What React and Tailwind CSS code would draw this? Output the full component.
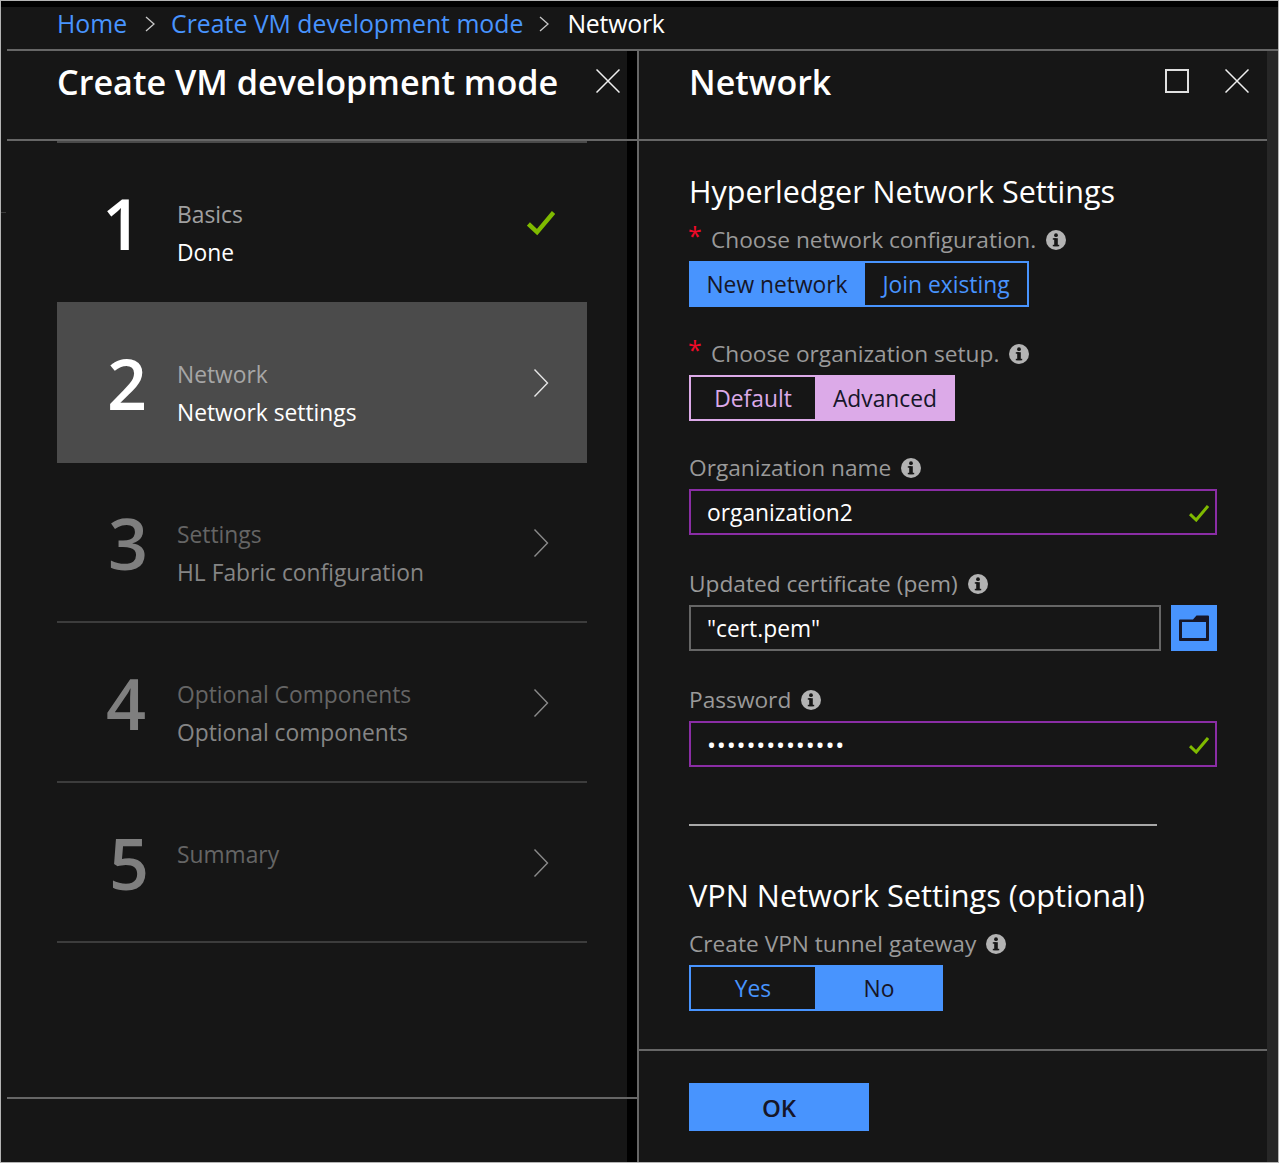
const F = '"Open Sans","Noto Sans",sans-serif';

function Info() {
  return (
    <svg width="20" height="20" viewBox="0 0 20 20" className="shrink-0">
      <circle cx="10" cy="10" r="10" fill="#b3b3b3" />
      <rect x="8.2" y="8.2" width="3.6" height="8" fill="#161616" />
      <rect x="6.8" y="8.2" width="3" height="1.5" fill="#161616" />
      <rect x="6.8" y="14.8" width="6.4" height="1.5" fill="#161616" />
      <circle cx="10" cy="5.2" r="1.9" fill="#161616" />
    </svg>
  );
}

function Check({ w = 20, h = 17, sw = 3 }) {
  return (
    <svg width={w} height={h} viewBox="0 0 20 17" className="shrink-0">
      <path d="M1 9.2 L7.2 15 L19 1" fill="none" stroke="#7fba00" strokeWidth={sw} />
    </svg>
  );
}

function Chevron({ color = '#c8c8c8' }) {
  return (
    <svg width="16" height="30" viewBox="0 0 16 30" className="shrink-0">
      <path d="M1.5 1.5 L14.5 15 L1.5 28.5" fill="none" stroke={color} strokeWidth="1.4" />
    </svg>
  );
}

function Crumb() {
  return (
    <svg width="10" height="16" viewBox="0 0 10 16" className="shrink-0">
      <path d="M1 1 L9 8 L1 15" fill="none" stroke="#c8c8c8" strokeWidth="1.3" />
    </svg>
  );
}

function Close() {
  return (
    <svg width="24" height="24" viewBox="0 0 24 24" className="shrink-0">
      <path d="M0.5 0.5 L23.5 23.5 M23.5 0.5 L0.5 23.5" stroke="#efefef" strokeWidth="1.5" />
    </svg>
  );
}

const digitPad = { 1: 'pl-[45px]', 2: 'pl-[50px]', 3: 'pl-[51px]', 4: 'pl-[49px]', 5: 'pl-[52px]' };

function Step({ n, title, sub, state }) {
  const active = state === 'active';
  const done = state === 'done';
  const dim = !active && !done;
  return (
    <div className={`flex items-start relative ${done ? 'h-[159px]' : ''} ${active ? 'h-[161px] pt-px bg-[#4b4b4b]' : ''} ${dim ? 'h-[160px] border-b-2 border-[#3c3c3c]' : ''}`}>
      <div className={`w-[120px] shrink-0 pt-[34px] ${digitPad[n]} text-[70px] leading-[92px] font-semibold ${dim ? 'text-[#7f7f7f]' : 'text-white'}`}>
        {n}
      </div>
      <div className="pt-[53px]">
        <div className={`text-[22.8px] leading-[38px] ${active ? 'text-[#a6a6a6]' : done ? 'text-[#a0a0a0]' : 'text-[#656565]'}`}>{title}</div>
        {sub && <div className={`text-[22.8px] leading-[38px] whitespace-nowrap ${dim ? 'text-[#858585]' : 'text-white'}`}>{sub}</div>}
      </div>
      <div className={`ml-auto pr-[38px] ${done ? 'pt-[67px]' : 'pt-[65px]'}`}>
        {done ? <div className="-mr-[6px]"><Check w={28} h={26} sw={3.2} /></div> : <Chevron color={dim ? '#8a8a8a' : '#e6e6e6'} />}
      </div>
    </div>
  );
}

function Label({ children, req, mt }) {
  return (
    <div style={{ marginTop: mt }} className="h-[28px] pt-[2px] flex items-center text-[22.7px] text-[#9a9a9a] whitespace-nowrap">
      {req && <span className="w-[22px] -ml-px mr-px text-[#f00a28] text-[25px] leading-none -mt-[9px]">*</span>}
      <span className="mr-[10px]">{children}</span>
      <Info />
    </div>
  );
}

function Seg({ a, b, aw, bw, on, color }) {
  const isBlue = color === 'blue';
  const c = isBlue ? 'border-[#4894fe]' : 'border-[#dcaae8]';
  const fill = isBlue ? 'bg-[#4894fe]' : 'bg-[#dcaae8]';
  const txt = isBlue ? 'text-[#4894fe]' : 'text-[#dcaae8]';
  const opt = (label, w, active, side) => (
    <div style={{ width: w }} className={`h-[46px] pt-[2px] flex items-center justify-center text-[22.8px] border-2 ${c} ${side} ${active ? `${fill} text-[#161628]` : txt}`}>{label}</div>
  );
  return (
    <div className="flex mt-[8px]">
      {opt(a, aw, on === 0, on === 0 ? '' : 'border-r-0')}
      {opt(b, bw, on === 1, on === 1 ? '' : 'border-l-0')}
    </div>
  );
}

export default function App() {
  return (
    <div style={{ fontFamily: F }} className="w-[1279px] h-[1163px] bg-[#161616] border border-[#b4b4b4] flex flex-col overflow-hidden relative">
      <div className="absolute left-0 top-[211px] w-[5px] h-px bg-[#3a3a3a]" />
      <div className="h-[6px] bg-black shrink-0" />
      <div className="h-[42px] shrink-0 flex items-center pl-[56px] pb-[8px] text-[24.8px] whitespace-nowrap">
        <span className="text-[#4894fe]">Home</span>
        <span className="ml-[18px] mr-[16px]"><Crumb /></span>
        <span className="text-[#4894fe]">Create VM development mode</span>
        <span className="ml-[16px] mr-[18px]"><Crumb /></span>
        <span className="text-white tracking-[-0.2px]">Network</span>
      </div>
      <div className="h-[2px] ml-[6px] -mr-[1px] bg-[#666666] shrink-0" />
      <div className="flex-1 flex min-h-0">
        <div className="w-[636px] shrink-0 flex relative">
          <div className="w-[626px] shrink-0 flex flex-col">
            <div className="h-[88px] shrink-0 flex items-start pl-[56px]">
              <div className="text-[34.2px] leading-[62px] font-semibold text-white whitespace-nowrap">Create VM development mode</div>
              <div className="ml-auto mt-[18px] mr-[7px]"><Close /></div>
            </div>
            <div className="h-[2px] ml-[6px] -mr-[10px] relative z-10 bg-[#666666] shrink-0" />
            <div className="ml-[56px] w-[530px]">
              <div className="h-[2px] bg-[#4a4a4a]" />
              <Step n="1" title="Basics" sub="Done" state="done" />
              <Step n="2" title="Network" sub="Network settings" state="active" />
              <Step n="3" title="Settings" sub="HL Fabric configuration" />
              <Step n="4" title="Optional Components" sub="Optional components" />
              <Step n="5" title="Summary" />
            </div>
            <div className="h-[2px] ml-[6px] -mr-[10px] mt-[154px] relative z-10 bg-[#666666] shrink-0" />
          </div>
          <div className="w-[10px] bg-black shrink-0" />
        </div>
        <div className="w-[2px] bg-[#666666] shrink-0" />
        <div className="w-[628px] shrink-0 flex flex-col">
          <div className="h-[88px] shrink-0 flex items-start pl-[50px]">
            <div className="text-[34px] leading-[62px] font-semibold text-white">Network</div>
            <div className="ml-auto mt-[18px] mr-[18px] flex items-center gap-[36px]">
              <div className="w-[24px] h-[24px] border-2 border-[#e0e0e0]" />
              <Close />
            </div>
          </div>
          <div className="h-[2px] bg-[#666666] shrink-0" />
          <div className="pl-[50px] w-[578px] pt-[31px]">
            <div className="h-[40px] leading-[38px] text-[30.5px] text-white whitespace-nowrap">Hyperledger Network Settings</div>
            <Label req mt={13}>Choose network configuration.</Label>
            <Seg a="New network" b="Join existing" aw={176} bw={164} on={0} color="blue" />
            <Label req mt={32}>Choose organization setup.</Label>
            <Seg a="Default" b="Advanced" aw={126} bw={140} on={1} color="purple" />
            <Label mt={32}>Organization name</Label>
            <div className="mt-[8px] h-[46px] pt-[2px] border-2 border-[#8a2da5] flex items-center justify-between pl-[16px] pr-[6px] text-[22.8px] text-white">
              organization2<Check />
            </div>
            <Label mt={34}>Updated certificate (pem)</Label>
            <div className="mt-[8px] flex gap-[10px]">
              <div className="flex-1 h-[46px] pt-[2px] border-2 border-[#666666] flex items-center pl-[16px] text-[22.8px] text-white">"cert.pem"</div>
              <div className="w-[46px] h-[46px] bg-[#4894fe] flex items-center justify-center">
                <svg width="30" height="26" viewBox="0 0 30 26">
                  <path d="M1 4.5 H14 L17.5 0.5 H29 Q30 0.5 30 1.5 V25 Q30 26 29 26 H1 Q0 26 0 25 V5.5 Q0 4.5 1 4.5 Z" fill="#161628" />
                  <rect x="3" y="7" width="24" height="16" fill="#4894fe" />
                </svg>
              </div>
            </div>
            <Label mt={34}>Password</Label>
            <div className="mt-[8px] h-[46px] pt-[2px] border-2 border-[#8a2da5] flex items-center justify-between pl-[16px] pr-[6px] text-[24px] text-white">
              <span className="tracking-[0.85px]">••••••••••••••</span><Check />
            </div>
            <div className="mt-[57px] h-[2px] w-[468px] bg-[#a8a8a8]" />
            <div className="mt-[50px] h-[40px] leading-[38px] text-[30.7px] text-white whitespace-nowrap">VPN Network Settings (optional)</div>
            <Label mt={13}>Create VPN tunnel gateway</Label>
            <Seg a="Yes" b="No" aw={126} bw={128} on={1} color="blue" />
          </div>
          <div className="h-[2px] mt-[38px] bg-[#666666] shrink-0" />
          <div className="pl-[50px] pt-[32px]">
            <div className="w-[180px] h-[48px] pt-[2px] bg-[#4894fe] flex items-center justify-center text-[24px] font-semibold text-[#161628]">OK</div>
          </div>
        </div>
        <div className="flex-1 bg-[#272727]" />
      </div>
    </div>
  );
}
